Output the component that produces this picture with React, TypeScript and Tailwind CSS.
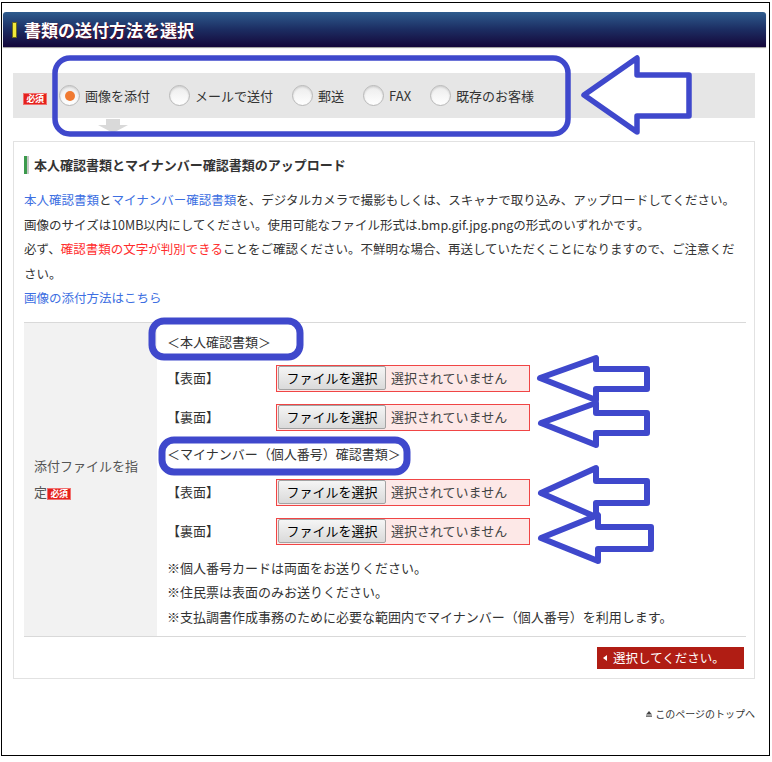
import React from "react";

const BLUE = "#3f48cc";

function Badge() {
  return (
    <span className="inline-flex items-center justify-center w-[24px] h-[12px] bg-[#e4211b] text-white text-[9px] font-bold leading-none tracking-[-0.5px] border border-[#f07070]">
      必須
    </span>
  );
}

function Radio({ label, checked }: { label: string; checked?: boolean }) {
  return (
    <div className="flex items-center mr-[19px]">
      <span className="w-[21px] h-[21px] rounded-full border border-[#b9b9b9] bg-gradient-to-b from-[#ececec] to-white flex items-center justify-center shadow-[inset_0_1px_2px_rgba(0,0,0,0.15)]">
        {checked && <span className="w-[10px] h-[10px] rounded-full bg-[#f07a32]" />}
      </span>
      <span className="ml-[5px] text-[13px] text-[#333]">{label}</span>
    </div>
  );
}

function FileRow({ side, className }: { side: string; className?: string }) {
  return (
    <div className={`flex items-center h-[27px] ${className ?? ""}`}>
      <span className="w-[109px] text-[13px] text-[#333]">{side}</span>
      <div className="w-[254px] h-[27px] border border-[#f04545] bg-[#fde8e7] flex items-center pl-[1px]">
        <div className="h-[24px] w-[108px] border border-[#a3a3a3] rounded-[2px] bg-gradient-to-b from-[#f5f5f5] to-[#dadada] flex items-center justify-center text-[13px] text-black">
          ファイルを選択
        </div>
        <span className="ml-[5px] text-[13px] text-[#444]">選択されていません</span>
      </div>
    </div>
  );
}

export default function App() {
  return (
    <div className="relative w-[772px] h-[762px] bg-white pt-[2px] pl-[1px] font-['Noto_Sans_CJK_JP',sans-serif] text-[#333]">
      <div className="w-[769px] h-[754px] border border-black">
        {/* Header */}
        <div className="ml-[1px] mt-[9px] w-[763px] h-[35px] rounded-t-[3px] bg-gradient-to-b from-[#2f5c8e] via-[#1c2d62] to-[#13063a] flex items-center pl-[9px] shadow-[0_1px_1px_rgba(0,0,0,0.4)]">
          <span className="w-[5px] h-[16px] bg-[#f2e93a] border border-[#6b6a20]" />
          <h1 className="ml-[7px] text-[17px] font-bold text-white [text-shadow:1px_1px_0_#4a0a2a]">
            書類の送付方法を選択
          </h1>
        </div>

        {/* Radio row */}
        <div className="ml-[11px] mt-[26px] w-[742px] h-[45px] bg-[#e6e6e6] flex items-center pl-[10px]">
          <div className="self-start mt-[10px]">
            <Badge />
          </div>
          <div className="ml-[12px] flex items-center">
            <Radio label="画像を添付" checked />
            <Radio label="メールで送付" />
            <Radio label="郵送" />
            <Radio label="FAX" />
            <Radio label="既存のお客様" />
          </div>
        </div>
        <div className="ml-[11px] h-[23px] pl-[85px] pt-[1px]">
          <svg width="30" height="14" viewBox="0 0 30 14">
            <rect x="8" y="0" width="14" height="6" fill="#d9d9d9" />
            <polygon points="0,6 30,6 15,14" fill="#d9d9d9" />
          </svg>
        </div>

        {/* Section */}
        <div className="ml-[11px] w-[742px] border border-[#e2e2e2] pt-[10px] pl-[10px] pr-[8px] pb-[9px] flex flex-col">
          <div className="h-[26px] flex items-center">
            <span className="w-[3px] h-[18px] bg-[#3c9a4c]" />
            <span className="w-[2px] h-[18px] bg-[#c8c8c8]" />
            <h2 className="ml-[5px] text-[13px] font-bold text-[#333]">
              本人確認書類とマイナンバー確認書類のアップロード
            </h2>
          </div>
          <div className="mt-[10px] text-[12.5px] leading-[24.5px] text-[#333]">
            <p>
              <span className="text-[#3d6fe2]">本人確認書類</span>と
              <span className="text-[#3d6fe2]">マイナンバー確認書類</span>
              を、デジタルカメラで撮影もしくは、スキャナで取り込み、アップロードしてください。
            </p>
            <p>画像のサイズは10MB以内にしてください。使用可能なファイル形式は.bmp.gif.jpg.pngの形式のいずれかです。</p>
            <p>
              必ず、<span className="text-[#ff2d2d]">確認書類の文字が判別できる</span>
              ことをご確認ください。不鮮明な場合、再送していただくことになりますので、ご注意ください。
            </p>
            <p className="text-[#3d6fe2]">画像の添付方法はこちら</p>
          </div>

          {/* Table */}
          <div className="mt-[11px] flex border-t border-b border-[#d9d9d9]">
            <div className="w-[133px] bg-[#f2f2f2] flex items-center px-[10px]">
              <p className="text-[13px] leading-[26px] text-[#555]">
                添付ファイルを指定
                <span className="inline-block align-middle -mt-[2px]">
                  <Badge />
                </span>
              </p>
            </div>
            <div className="flex-1 pl-[10px] pt-[6px] pb-[7px] text-[13px]">
              <p className="leading-[25px]">＜本人確認書類＞</p>
              <FileRow side="【表面】" className="mt-[11px]" />
              <FileRow side="【裏面】" className="mt-[12px]" />
              <p className="mt-[10px] leading-[25px]">＜マイナンバー（個人番号）確認書類＞</p>
              <FileRow side="【表面】" className="mt-[13px]" />
              <FileRow side="【裏面】" className="mt-[12px]" />
              <div className="mt-[11px] leading-[24.5px]">
                <p>※個人番号カードは両面をお送りください。</p>
                <p>※住民票は表面のみお送りください。</p>
                <p>※支払調書作成事務のために必要な範囲内でマイナンバー（個人番号）を利用します。</p>
              </div>
            </div>
          </div>

          <div className="mt-[10px] self-end mr-[2px] w-[147px] h-[22px] bg-[#b01d14] flex items-center pl-[6px]">
            <svg width="4" height="6" viewBox="0 0 4 6">
              <polygon points="4,0 4,6 0,3" fill="#fff" />
            </svg>
            <span className="ml-[6px] text-[12.5px] text-white">選択してください。</span>
          </div>
        </div>

        {/* Page top */}
        <div className="ml-[11px] w-[742px] mt-[28px] flex justify-end items-center">
          <svg width="6" height="6" viewBox="0 0 6 6">
            <polygon points="3,0 6,3.5 0,3.5" fill="#444" />
            <rect x="0" y="4.5" width="6" height="1.2" fill="#444" />
          </svg>
          <span className="ml-[3px] text-[10px] leading-[14px] text-[#333]">このページのトップへ</span>
        </div>
      </div>

      {/* Annotation overlay */}
      <svg
        className="absolute left-0 top-0 pointer-events-none"
        width="772"
        height="762"
        viewBox="0 0 772 762"
      >
        <rect x="55" y="58" width="513" height="76" rx="15" fill="none" stroke={BLUE} strokeWidth="5.5" />
        <polygon
          points="584,95 637,58 637,75 689,75 689,116 637,116 637,132"
          fill="#fff"
          stroke={BLUE}
          strokeWidth="5.5"
          strokeLinejoin="round"
        />
        <rect x="152" y="321" width="148" height="36" rx="12" fill="none" stroke={BLUE} strokeWidth="7" />
        <rect x="162" y="440" width="245" height="32" rx="12" fill="none" stroke={BLUE} strokeWidth="7" />
        <polygon
          points="540,378 596,358 596,369 647,369 647,389 596,389 596,400"
          fill="#fff"
          stroke={BLUE}
          strokeWidth="6"
          strokeLinejoin="round"
        />
        <polygon
          points="541,423 596,403 596,413 647,413 647,433 596,433 596,445"
          fill="#fff"
          stroke={BLUE}
          strokeWidth="6"
          strokeLinejoin="round"
        />
        <polygon
          points="541,493 596,468 596,481 647,481 647,503 596,503 596,517"
          fill="#fff"
          stroke={BLUE}
          strokeWidth="6"
          strokeLinejoin="round"
        />
        <polygon
          points="541,538 598,515 598,527 651,527 651,549 598,549 598,561"
          fill="#fff"
          stroke={BLUE}
          strokeWidth="6"
          strokeLinejoin="round"
        />
      </svg>
    </div>
  );
}
